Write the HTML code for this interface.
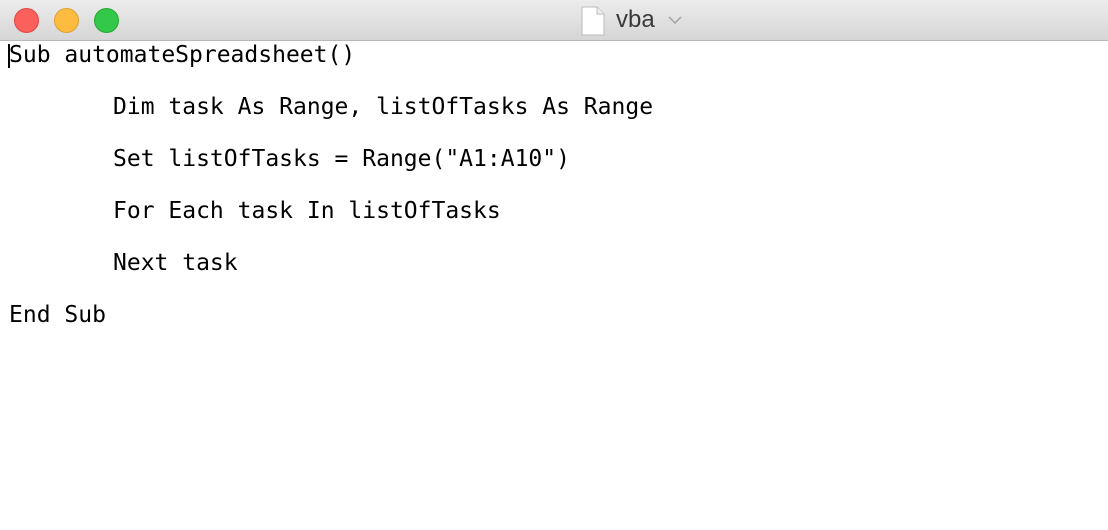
<!DOCTYPE html>
<html><head><style>
body{margin:0;width:1108px;height:530px;background:#fff;overflow:hidden;font-family:"DejaVu Sans Mono","Liberation Mono",monospace}
.bar{position:absolute;left:0;top:0;width:1108px;height:40px;background:linear-gradient(#ececec,#d6d6d6);border-bottom:1px solid #b8b8b8}
.dot{position:absolute;top:8px;width:23px;height:23px;border-radius:50%}
.title{position:absolute;left:616px;top:6px;font:24px "Liberation Sans",sans-serif;color:#3a3a3a}
.code{position:absolute;left:9px;top:29px;font-size:23px;line-height:52px;color:#000;white-space:pre}
.i{padding-left:104px}
.cur{position:absolute;left:8px;top:44px;width:2px;height:24px;background:#000}
</style></head><body>
<div class="bar">
<div class="dot" style="left:14px;background:#fc605c;border:0.5px solid #de4a43"></div>
<div class="dot" style="left:54px;background:#fdbc40;border:0.5px solid #dea032"></div>
<div class="dot" style="left:94px;background:#34c84a;border:0.5px solid #27a935"></div>
<svg style="position:absolute;left:581px;top:6px" width="24" height="30" viewBox="0 0 24 30"><path d="M1 1H16L23 8V29H1Z" fill="#fff" stroke="#bbb"/><path d="M16 1V8H23" fill="#eee" stroke="#bbb"/></svg>
<div class="title">vba</div>
<svg style="position:absolute;left:668px;top:16px" width="14" height="9"><path d="M1 1L7 7L13 1" fill="none" stroke="#a8a8a8" stroke-width="1.6"/></svg>
</div>
<div class="cur"></div>
<div class="code">Sub automateSpreadsheet()
<span class="i">Dim task As Range, listOfTasks As Range</span>
<span class="i">Set listOfTasks = Range("A1:A10")</span>
<span class="i">For Each task In listOfTasks</span>
<span class="i">Next task</span>
End Sub</div>
</body></html>
